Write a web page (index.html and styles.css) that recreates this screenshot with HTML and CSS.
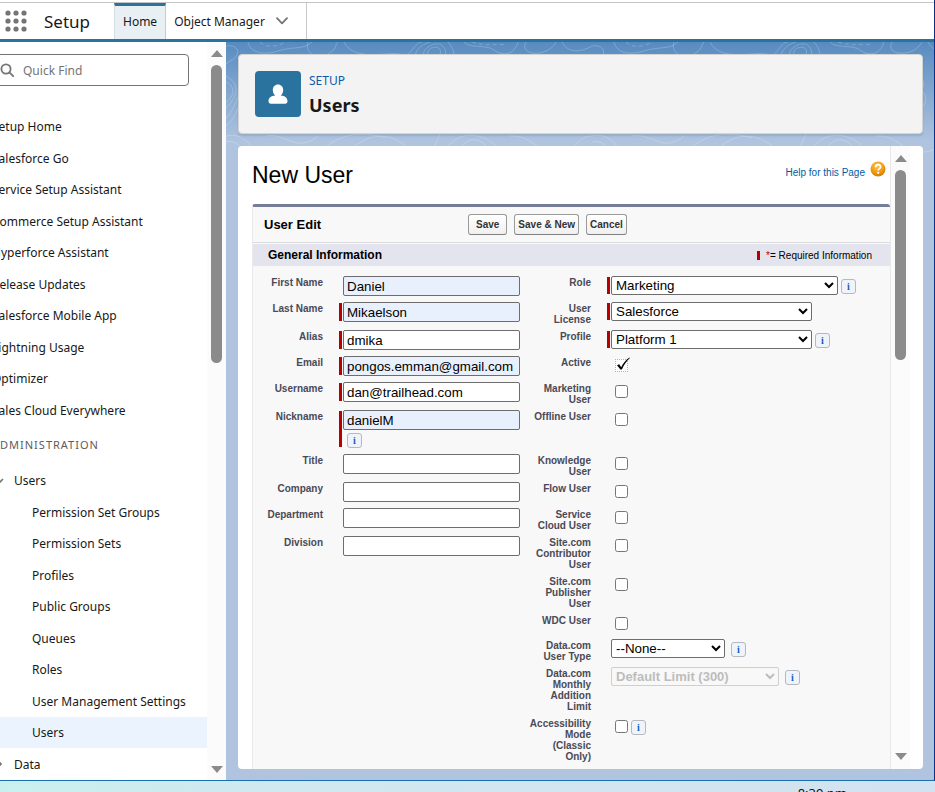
FILE: index.html
```html
<!DOCTYPE html>
<html lang="en">
<head>
<meta charset="utf-8">
<title>Users | Setup</title>
<link rel="stylesheet" href="styles.css">
</head>
<body>
<div class="window">
  <header class="topbar">
    <svg class="waffle" viewBox="0 0 22 22" aria-hidden="true"><g fill="#747474"><circle cx="3" cy="3" r="2.6"/><circle cx="11" cy="3" r="2.6"/><circle cx="19" cy="3" r="2.6"/><circle cx="3" cy="11" r="2.6"/><circle cx="11" cy="11" r="2.6"/><circle cx="19" cy="11" r="2.6"/><circle cx="3" cy="19" r="2.6"/><circle cx="11" cy="19" r="2.6"/><circle cx="19" cy="19" r="2.6"/></g></svg>
    <span class="app-name">Setup</span>
    <nav class="tabs">
      <a class="tab active" href="#">Home</a>
      <a class="tab" href="#">Object Manager
        <svg class="chevron" viewBox="0 0 12 8" aria-hidden="true"><path d="M1 1.2 L6 6.4 L11 1.2" fill="none" stroke="#747474" stroke-width="1.8" stroke-linecap="round" stroke-linejoin="round"/></svg></a>
    </nav>
  </header>
  <div class="workspace">
    <aside class="sidebar">
      <div class="side-content">
        <div class="quick-find">
          <svg viewBox="0 0 14 14" aria-hidden="true"><g fill="none" stroke="#747474" stroke-width="1.8"><circle cx="6" cy="6" r="4.6"/><path d="M9.4 9.4 L13.2 13.2" stroke-linecap="round"/></g></svg>
          <input type="search" placeholder="Quick Find" aria-label="Quick Find">
        </div>
        <ul class="nav-list">
          <li><a href="#">Setup Home</a></li>
          <li><a href="#">Salesforce Go</a></li>
          <li><a href="#">Service Setup Assistant</a></li>
          <li><a href="#">Commerce Setup Assistant</a></li>
          <li><a href="#">Hyperforce Assistant</a></li>
          <li><a href="#">Release Updates</a></li>
          <li><a href="#">Salesforce Mobile App</a></li>
          <li><a href="#">Lightning Usage</a></li>
          <li><a href="#">Optimizer</a></li>
          <li><a href="#">Sales Cloud Everywhere</a></li>
        </ul>
        <h2 class="nav-heading">ADMINISTRATION</h2>
        <ul class="nav-list tree">
          <li class="branch"><svg viewBox="0 0 10 10" aria-hidden="true"><path d="M1 3 L5 7 L9 3" fill="none" stroke="#747474" stroke-width="1.6"/></svg><a href="#">Users</a></li>
          <li><a href="#">Permission Set Groups</a></li>
          <li><a href="#">Permission Sets</a></li>
          <li><a href="#">Profiles</a></li>
          <li><a href="#">Public Groups</a></li>
          <li><a href="#">Queues</a></li>
          <li><a href="#">Roles</a></li>
          <li><a href="#">User Management Settings</a></li>
          <li class="current"><a href="#">Users</a></li>
          <li class="branch"><svg viewBox="0 0 10 10" aria-hidden="true"><path d="M4 2 L7 5 L4 8" fill="none" stroke="#747474" stroke-width="1.6"/></svg><a href="#">Data</a></li>
        </ul>
      </div>
      <div class="scrollbar side-scroll"><i class="up"></i><div class="track"><div class="thumb"></div></div><i class="down"></i></div>
    </aside>
    <main class="main">
      <svg class="contours" aria-hidden="true">
        <defs>
          <pattern id="topo" width="366" height="112" patternUnits="userSpaceOnUse">
            <g fill="none" stroke="#fff" stroke-opacity=".26" stroke-width=".8">
              <path d="M0 4 C12 2 16 12 6 18 S-4 24 0 30"/>
              <path d="M22 0 C24 10 36 14 52 9 S78 8 86 0"/>
              <path d="M34 0 C40 6 50 5 58 1" stroke-dasharray="4 3"/>
              <path d="M82 0 C78 12 92 18 102 12 S108 4 112 0"/>
              <path d="M118 0 C124 12 138 14 160 12 S178 18 186 8 S192 2 196 0"/>
              <path d="M204 0 C184 6 184 24 206 26 S234 14 222 0"/>
              <path d="M208 2 C192 8 196 20 208 20 S224 8 214 2Z"/>
              <path d="M205 6 C198 11 203 16 209 15 S217 8 211 5Z"/>
              <path d="M238 0 C244 7 260 2 268 8 S288 14 292 0"/>
              <path d="M246 0 C260 5 270 1 280 3" stroke-dasharray="4 3"/>
              <path d="M300 0 C292 14 322 16 330 0"/>
              <path d="M336 0 C342 12 356 10 366 4"/>
              <path d="M0 34 C18 44 8 58 0 66"/><path d="M0 40 C12 46 6 56 0 60"/>
              <path d="M0 76 C8 68 14 52 15 40"/><path d="M0 84 C9 76 14 66 15 50"/>
              <path d="M0 94 C10 92 20 94 30 112"/><path d="M0 100 C8 98 14 102 20 112"/>
              <path d="M40 94 C60 90 70 112 92 94"/><path d="M92 112 C112 92 132 88 160 96"/>
              <path d="M120 112 C140 92 160 88 180 104 S206 112 214 92"/><path d="M218 112 C228 86 262 88 276 112"/>
              <path d="M232 112 C240 92 256 94 266 112"/><path d="M284 94 C306 92 310 112 332 110 S350 94 366 94"/>
              <path d="M322 50 C332 44 338 58 330 66 S322 78 326 84"/><path d="M330 16 C318 30 340 38 328 50"/>
            </g>
          </pattern>
        </defs>
        <rect width="100%" height="112" fill="url(#topo)"/>
      </svg>
      <section class="page-header">
        <div class="page-icon"><svg viewBox="0 0 46 46" aria-hidden="true"><path fill="#fff" d="M23 13.500c3 0 5.200 2.300 5.200 5.400 0 2.400-1 4.500-2.500 5.600 4.400.2 6.800 2.400 6.800 5.600 0 1.700-.9 2.700-2.300 2.700H15.800c-1.400 0-2.300-1-2.300-2.700 0-3.200 2.400-5.400 6.800-5.600-1.500-1.100-2.500-3.200-2.500-5.600 0-3.100 2.200-5.400 5.200-5.400z"/></svg></div>
        <div><p class="eyebrow">SETUP</p><h1>Users</h1></div>
      </section>
      <section class="panel">
        <div class="panel-content">
          <div class="title-row">
            <h2>New User</h2>
            <a class="help" href="#">Help for this Page
              <svg viewBox="0 0 16 16" aria-hidden="true"><defs><radialGradient id="amber" cx=".45" cy=".3" r=".75"><stop offset="0" stop-color="#ffc64b"/><stop offset=".6" stop-color="#f09a12"/><stop offset="1" stop-color="#c87408"/></radialGradient></defs><circle cx="8" cy="8" r="7.500" fill="url(#amber)"/><path d="M5.600 6.300c0-3.500 5-3.300 5-.4 0 1.700-2.400 1.800-2.400 3.600" fill="none" stroke="#fff" stroke-width="1.700"/><circle cx="8.200" cy="11.800" r="1.100" fill="#fff"/></svg></a>
          </div>
          <form class="edit">
            <div class="edit-head">
              <h3>User Edit</h3>
              <div class="actions"><button type="button">Save</button><button type="button">Save &amp; New</button><button type="button">Cancel</button></div>
            </div>
            <div class="section-head">
              <h3>General Information</h3>
              <p><i class="req"></i><span class="star">*</span>= Required Information</p>
            </div>
            <div class="fields">
              <label for="first">First Name</label>
              <div class="field"><i></i><input id="first" class="filled" type="text" value="Daniel"></div>
              <label for="role">Role</label>
              <div class="field"><i class="req"></i><select id="role" class="wide"><option>Marketing</option></select><button type="button" class="info" aria-label="Role info">i</button></div>

              <label for="last">Last Name</label>
              <div class="field"><i class="req"></i><input id="last" class="filled" type="text" value="Mikaelson"></div>
              <label for="license">User License</label>
              <div class="field"><i class="req"></i><select id="license" class="medium"><option>Salesforce</option></select></div>

              <label for="alias">Alias</label>
              <div class="field"><i class="req"></i><input id="alias" type="text" value="dmika"></div>
              <label for="profile">Profile</label>
              <div class="field"><i class="req"></i><select id="profile" class="medium"><option>Platform 1</option></select><button type="button" class="info" aria-label="Profile info">i</button></div>

              <label for="email">Email</label>
              <div class="field"><i class="req"></i><input id="email" class="filled" type="text" value="pongos.emman@gmail.com"></div>
              <label for="active">Active</label>
              <div class="field"><i></i><span class="ticked"><input id="active" type="checkbox" checked><svg viewBox="0 0 16 16" aria-hidden="true"><path d="M2 9.200 L4.200 8.200 L6.200 11.200 C8 7.400 10.500 4 14.500 1.400 L14.900 1.900 C11.500 5 8.800 9 6.900 13.400 L5.400 13.600 Z"/></svg></span></div>

              <label for="username">Username</label>
              <div class="field"><i class="req"></i><input id="username" type="text" value="dan@trailhead.com"></div>
              <label for="mkt">Marketing User</label>
              <div class="field"><i></i><input id="mkt" type="checkbox"></div>

              <label for="nick">Nickname</label>
              <div class="field"><i class="req"></i><div class="stack"><input id="nick" class="filled" type="text" value="danielM"><button type="button" class="info" aria-label="Nickname info">i</button></div></div>
              <label for="offline">Offline User</label>
              <div class="field"><i></i><input id="offline" type="checkbox"></div>

              <label for="title">Title</label>
              <div class="field"><i></i><input id="title" type="text"></div>
              <label for="know">Knowledge User</label>
              <div class="field"><i></i><input id="know" type="checkbox"></div>

              <label for="company">Company</label>
              <div class="field"><i></i><input id="company" type="text"></div>
              <label for="flow">Flow User</label>
              <div class="field"><i></i><input id="flow" type="checkbox"></div>

              <label for="dept">Department</label>
              <div class="field"><i></i><input id="dept" type="text"></div>
              <label for="cloud">Service Cloud User</label>
              <div class="field"><i></i><input id="cloud" type="checkbox"></div>

              <label for="division">Division</label>
              <div class="field"><i></i><input id="division" type="text"></div>
              <label for="contrib">Site.com Contributor User</label>
              <div class="field"><i></i><input id="contrib" type="checkbox"></div>

              <label class="right" for="publisher">Site.com Publisher User</label>
              <div class="field"><i></i><input id="publisher" type="checkbox"></div>

              <label class="right" for="wdc">WDC User</label>
              <div class="field"><i></i><input id="wdc" type="checkbox"></div>

              <label class="right" for="dtype">Data.com User Type</label>
              <div class="field spaced"><i></i><select id="dtype" class="small"><option>--None--</option></select><button type="button" class="info" aria-label="User type info">i</button></div>

              <label class="right" for="limit">Data.com Monthly Addition Limit</label>
              <div class="field spaced"><i></i><select id="limit" class="limit" disabled><option>Default Limit (300)</option></select><button type="button" class="info" aria-label="Limit info">i</button></div>

              <label class="right" for="access">Accessibility Mode (Classic Only)</label>
              <div class="field"><i></i><input id="access" type="checkbox"><button type="button" class="info" aria-label="Accessibility info">i</button></div>
            </div>
          </form>
        </div>
        <div class="scrollbar panel-scroll"><i class="up"></i><div class="track"><div class="thumb"></div></div><i class="down"></i></div>
      </section>
    </main>
  </div>
</div>
<footer class="taskbar"><time>8:39 pm</time></footer>
</body>
</html>
```
FILE: styles.css
```css
* { box-sizing: border-box; }
html, body { height: 100%; }
body {
  margin: 0;
  display: flex;
  flex-direction: column;
  overflow: hidden;
  font-family: "Noto Sans", sans-serif;
  font-size: 12px;
  color: #181818;
  background: #d0e8f0;
}
h1, h2, h3, p, ul { margin: 0; padding: 0; }
ul { list-style: none; }
a { color: inherit; text-decoration: none; }
svg { display: block; flex: none; }

.window {
  flex: 1;
  min-height: 0;
  display: flex;
  flex-direction: column;
  background: #fff;
  border-right: 1px solid #0c2f86;
  border-bottom: 1px solid #1a6fae;
}

/* Top bar */
.topbar {
  flex: none;
  height: 42px;
  padding-top: 3px;
  display: flex;
  align-items: center;
  border-bottom: 3px solid #2a739e;
  background: linear-gradient(#c4c4c4, #c4c4c4) 0 2px / 100% 1px no-repeat #fff;
}
.waffle { width: 22px; height: 22px; margin-left: 5px; }
.app-name { width: 70px; margin: 0 0 0 17px; font-size: 17px; }
.tabs { align-self: stretch; display: flex; border-right: 1px solid #c9c9c9; }
.tab {
  display: flex;
  align-items: center;
  gap: 11px;
  padding: 0 18px 0 8px;
}
.tab.active {
  padding: 0 8px 2px;
  background: #e9f0f4;
  border-top: 3px solid #2a739e;
  border-right: 1px solid #c9c9c9;
  border-left: 1px solid #d5dde2;
}
.chevron { width: 12px; height: 8px; }

/* Sidebar */
.workspace { flex: 1; min-height: 0; display: flex; }
.sidebar { flex: none; width: 226px; display: flex; overflow: hidden; }
.side-content { flex: 1; min-width: 0; padding-top: 12px; overflow: hidden; }
.quick-find {
  display: flex;
  align-items: center;
  gap: 9px;
  height: 32px;
  margin: 0 18px 25px -8px;
  padding-left: 7px;
  border: 1px solid #747474;
  border-radius: 4px;
}
.quick-find svg { width: 14px; height: 14px; }
.quick-find input {
  flex: 1;
  min-width: 0;
  padding: 0;
  border: 0;
  outline: 0;
  background: none;
  font: 12px "Noto Sans", sans-serif;
}
.quick-find input::placeholder { color: #747474; }
.nav-list li {
  display: flex;
  align-items: center;
  height: 32px;
  padding-left: 32px;
}
.nav-list li:nth-child(odd) { height: 31px; }
.nav-list:not(.tree) li { padding: 0; margin-left: -8px; }
.nav-heading {
  margin-left: -8px;
  padding: 9px 0 10px;
  font-size: 11px;
  line-height: 20px;
  font-weight: 400;
  color: #5c5c5c;
  letter-spacing: 1px;
}
.nav-list .branch { padding-left: 0; gap: 10px; margin-left: -6px; }
.branch svg { width: 10px; height: 10px; }
.current { background: #ebf4fe; }

/* Drawn scrollbars */
.scrollbar {
  flex: none;
  width: 19px;
  display: flex;
  flex-direction: column;
  align-items: center;
  gap: 8px;
  padding: 8px 0 7px;
  background: #fbfbfb;
}
.scrollbar i { border: solid transparent; border-width: 0 6px; }
.scrollbar .up { border-bottom: 7px solid #8b8b8b; }
.scrollbar .down { border-top: 7px solid #8b8b8b; }
.track { flex: 1; width: 11px; }
.thumb { border-radius: 6px; background: #8b8b8b; height: 43%; }
.panel-scroll .thumb { height: 33%; }
.panel-scroll { padding: 9px 0; width: 20px; border-left: 1px solid #e8e8e8; }

/* Main area */
.main {
  flex: 1;
  min-width: 0;
  position: relative;
  display: flex;
  flex-direction: column;
  gap: 12px;
  padding: 12px 11px 11px 12px;
  background: linear-gradient(#578bc0, #b0c4df 100px);
}
.contours { position: absolute; inset: 0; width: 100%; height: 112px; }
.page-header {
  position: relative;
  flex: none;
  display: flex;
  align-items: center;
  gap: 8px;
  height: 80px;
  padding: 0 16px;
  border: 1px solid #d4d4d4;
  border-radius: 4px;
  background: #f3f3f3;
  box-shadow: 0 2px 2px rgba(0, 0, 0, .1);
}
.page-icon { width: 46px; height: 46px; border-radius: 4px; background: #2a739e; }
.eyebrow { font-size: 12px; line-height: 22px; color: #0b5cab; }
h1 { font-size: 18px; line-height: 26px; font-weight: 700; }

.panel {
  position: relative;
  flex: 1;
  min-height: 0;
  display: flex;
  padding: 0 13px 0 14px;
  border-radius: 4px;
  background: #fff;
  overflow: hidden;
  font-family: "Liberation Sans", Arial, sans-serif;
}
.panel-content { flex: 1; min-width: 0; display: flex; flex-direction: column; }
.title-row {
  flex: none;
  display: flex;
  justify-content: space-between;
  height: 58px;
  padding: 15px 4px 0 0;
}
.title-row h2 { font-size: 23px; line-height: 28px; font-weight: 400; color: #000; }
.help { display: flex; align-items: flex-start; gap: 5px; font-size: 10px; line-height: 24px; color: #015ba7; }
.help svg { width: 16px; height: 16px; }

.edit { flex: 1; border-top: 3px solid #747e96; border-left: 1px solid #eaeaea; border-radius: 3px 3px 0 0; background: #f8f8f8; }
.edit-head {
  display: flex;
  align-items: center;
  height: 36px;
  padding-left: 11px;
  border-bottom: 1px solid #dbdbdb;
}
.edit-head h3 { width: 204px; font-size: 13px; color: #000; }
.actions { display: flex; gap: 7px; }
.actions button {
  height: 21px;
  padding: 0 3px;
  border: 1px solid #9a9a9a;
  border-bottom-color: #7f7f7f;
  border-radius: 3px;
  background: linear-gradient(#fff, #f0f0f0);
  font: bold 10px "Liberation Sans", Arial, sans-serif;
  color: #333;
}
.actions button:first-child { padding: 0 7px; }
.section-head {
  display: flex;
  align-items: center;
  justify-content: space-between;
  height: 22px;
  margin-top: 1px;
  padding: 0 18px 0 15px;
  background: #e3e4ed;
  color: #000;
}
.section-head h3 { font-size: 12px; }
.section-head p { display: flex; align-items: center; font-size: 10px; }
.section-head .req { width: 3px; height: 9px; margin-right: 6px; background: #b90000; }
.star { color: #b90000; }

.fields {
  display: grid;
  grid-template-columns: 86px minmax(181px, 39fr) 87px minmax(0, 61fr);
  row-gap: 6px;
  padding-top: 10px;
}
.fields label {
  padding: 1px 16px 0 9px;
  margin-bottom: -1px;
  font-size: 10px;
  line-height: 11px;
  font-weight: 700;
  text-align: right;
  color: #4a4a56;
}
.fields .right { grid-column: 3; }
.field { display: flex; align-self: start; align-items: flex-start; }
.field > i { flex: none; align-self: stretch; width: 3px; margin: 1px 1px 1px 0; }
.field .req { background: #b90000; }
.fields input[type="text"] {
  width: 177px;
  height: 20px;
  padding: 0 3px;
  border: 1px solid #6d6d6d;
  border-radius: 2px;
  background: #fff;
  font-family: "Liberation Sans", Arial, sans-serif;
  color: #000;
}
.fields input.filled { background: #e8f0fe; }
.fields input[type="checkbox"] { width: 13px; height: 13px; margin: 3px 0 3px 4px; }
.fields select {
  height: 19px;
  padding: 0;
  border: 1px solid #6d6d6d;
  border-radius: 2px;
  background: #fff;
  font-family: "Liberation Sans", Arial, sans-serif;
  color: #000;
}
.wide { width: 227px; }
.medium { width: 201px; }
.small { width: 114px; }
.limit { width: 168px; }
.fields select:disabled { opacity: 1; border-color: #cfcfcf; background: #f8f8f8; color: #bdbdbd; font-weight: 700; }
.fields .limit { font-size: 13px; }
.info {
  flex: none;
  width: 15px;
  height: 15px;
  margin: 3px 0 0 3px;
  padding: 0;
  border: 1px solid #b4b8bf;
  border-radius: 3px;
  background: #f0f4fa;
  font: bold 10px/12px "Liberation Serif", serif;
  color: #0b5fc0;
}
.spaced .info { margin-left: 6px; }
.stack { display: flex; flex-direction: column; }
.stack .info { margin-left: 4px; }
.ticked { position: relative; display: flex; }
.fields .ticked input { appearance: none; border: 1px dotted #b0b0b0; background: #fff; }
.ticked svg { position: absolute; left: 4px; top: 0; width: 16px; height: 16px; pointer-events: none; }

/* Desktop taskbar strip */
.taskbar {
  flex: none;
  height: 11px;
  overflow: hidden;
  display: flex;
  justify-content: flex-end;
  padding: 4px 88px 0 0;
  background: linear-gradient(90deg, #c9f0ee, #d0e8f0 30%, #d3e2f0);
  color: #111;
}
.taskbar time { font-size: 13px; line-height: 16px; }
```
